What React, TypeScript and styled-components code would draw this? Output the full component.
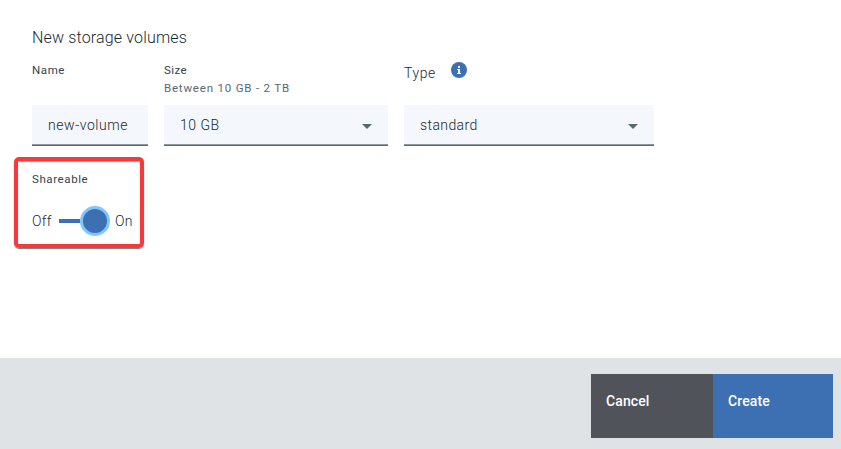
import React from "react";
import styled, { createGlobalStyle } from "styled-components";

const GlobalStyle = createGlobalStyle`
  *, *::before, *::after { box-sizing: border-box; }
  body {
    margin: 0;
    background: #fff;
    color: #152935;
    font-family: Roboto, "Liberation Sans", sans-serif;
    overflow: hidden;
  }
`;

const Page = styled.div`
  display: flex;
  flex-direction: column;
  height: 449px;
`;

const Content = styled.main`
  flex: 1;
  padding: 26px 32px 0;
`;

const Title = styled.h1`
  margin: 0;
  font-size: 16px;
  font-weight: 300;
  line-height: 24px;
  letter-spacing: 0.16px;
  color: #152935;
`;

const FieldRow = styled.div`
  display: grid;
  grid-template-columns: 116px 224px 250px;
  column-gap: 16px;
  padding-top: 11px;
`;

const Field = styled.div`
  display: flex;
  flex-direction: column;
`;

const FieldHead = styled.div`
  height: 44px;
`;

const Label = styled.label<{ $spacing?: number }>`
  display: block;
  font-size: 11.5px;
  line-height: 18px;
  letter-spacing: ${(p) => p.$spacing ?? 0.6}px;
  color: #34444f;
`;

const Hint = styled(Label)`
  color: #5a6872;
`;

const TypeHead = styled(FieldHead)`
  display: flex;
  align-items: flex-start;
`;

const TypeLabel = styled.span`
  width: 47px;
  font-size: 14px;
  font-weight: 300;
  line-height: 24px;
  letter-spacing: 0.6px;
  color: #152935;
`;

const Control = styled.div<{ $spacing: number }>`
  display: flex;
  align-items: center;
  justify-content: space-between;
  height: 41px;
  padding: 0 16px 1px;
  border-bottom: 1px solid #5a6872;
  box-shadow: inset 0 -1px 0 #8c989f;
  background: #f4f7fb;
  font-size: 14px;
  font-weight: 300;
  letter-spacing: ${(p) => p.$spacing}px;
  color: #152935;
  white-space: nowrap;
`;

const ShareGroup = styled.section`
  position: relative;
  width: 116px;
  padding-top: 24px;
`;

const Highlight = styled.div`
  position: absolute;
  top: 11px;
  left: -18px;
  width: 130px;
  height: 91px;
  border: 4px solid #f43b3c;
  border-radius: 5px;
  box-shadow: 0 1px 1px #777, inset 0 1px 1px #999;
`;

const ToggleRow = styled.div`
  display: flex;
  align-items: center;
  height: 30px;
  margin-top: 18px;
`;

const ToggleText = styled.span<{ $width: number; $spacing: number }>`
  width: ${(p) => p.$width}px;
  padding-bottom: 1px;
  font-size: 14px;
  font-weight: 300;
  letter-spacing: ${(p) => p.$spacing}px;
  color: #152935;
`;

const Track = styled.div`
  width: 21px;
  height: 4px;
  background: #3d70b2;
`;

const Knob = styled.div`
  flex: none;
  width: 30px;
  height: 30px;
  margin-right: 5px;
  border: 3px solid #7cc7ff;
  border-radius: 50%;
  background: #3d70b2;
`;

const Footer = styled.footer`
  display: flex;
  justify-content: flex-end;
  height: 91px;
  padding: 16px 8px 11px;
  background: #dfe3e6;
`;

const Button = styled.button<{ $primary?: boolean }>`
  display: flex;
  width: ${(p) => (p.$primary ? 120 : 122)}px;
  height: 64px;
  padding: 17px 15px;
  border: 0;
  background: ${(p) => (p.$primary ? "#3d70b2" : "#50535a")};
  color: #fff;
  font-family: inherit;
  font-size: 14px;
  font-weight: 500;
  line-height: 20px;
  letter-spacing: 0.1px;
`;

const CaretIcon = styled.svg`
  margin-top: 3px;
`;

const Caret = () => (
  <CaretIcon width="10" height="5" viewBox="0 0 10 5">
    <path d="M0 0h10L5 5z" fill="#5a6872" />
  </CaretIcon>
);

const InfoSvg = styled.svg`
  margin-top: 1px;
`;

const InfoIcon = () => (
  <InfoSvg width="16" height="16" viewBox="0 0 16 16">
    <circle cx="8" cy="8" r="8" fill="#3d70b2" />
    <path d="M7 4h2v2H7zM6 7h3v4h1v1H6v-1h1V8H6z" fill="#fff" />
  </InfoSvg>
);

export default function App() {
  return (
    <Page>
      <GlobalStyle />
      <Content>
        <Title>New storage volumes</Title>
        <FieldRow>
          <Field>
            <FieldHead><Label>Name</Label></FieldHead>
            <Control $spacing={0.55}>new-volume</Control>
          </Field>
          <Field>
            <FieldHead>
              <Label $spacing={0.4}>Size</Label>
              <Hint as="div" $spacing={0.8}>Between 10 GB - 2 TB</Hint>
            </FieldHead>
            <Control $spacing={0.5}>10 GB<Caret /></Control>
          </Field>
          <Field>
            <TypeHead><TypeLabel>Type</TypeLabel><InfoIcon /></TypeHead>
            <Control $spacing={0.4}>standard<Caret /></Control>
          </Field>
        </FieldRow>
        <ShareGroup>
          <Label>Shareable</Label>
          <ToggleRow>
            <ToggleText $width={27} $spacing={0.3}>Off</ToggleText>
            <Track />
            <Knob />
            <ToggleText $width={20} $spacing={0.3}>On</ToggleText>
          </ToggleRow>
          <Highlight />
        </ShareGroup>
      </Content>
      <Footer>
        <Button>Cancel</Button>
        <Button $primary>Create</Button>
      </Footer>
    </Page>
  );
}
